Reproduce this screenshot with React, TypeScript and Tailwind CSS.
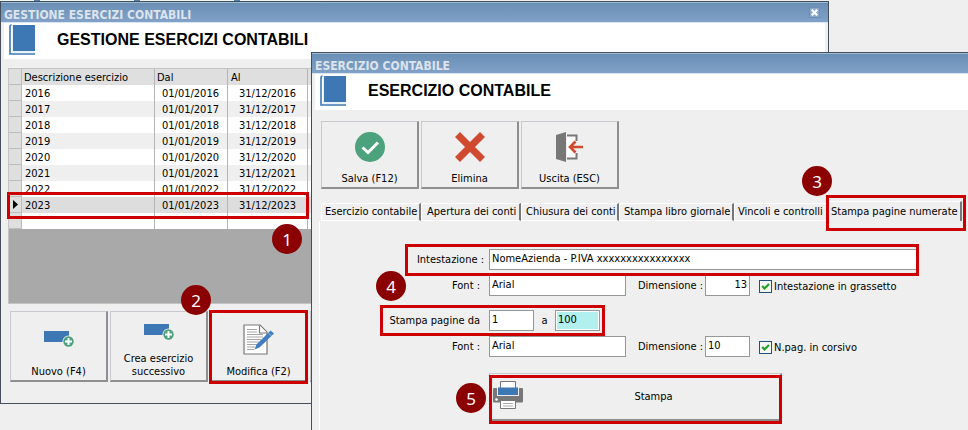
import React from 'react';

const YEARS = ['2016', '2017', '2018', '2019', '2020', '2021', '2022', '2023'];
const CURRENT_YEAR = '2023';

const TABS = [
  { label: 'Esercizio contabile', size: 'w-[100px] pl-[3px]' },
  { label: 'Apertura dei conti', size: 'w-[100px] pl-[5px]' },
  { label: 'Chiusura dei conti', size: 'w-[98px] pl-[4px]' },
  { label: 'Stampa libro giornale', size: 'w-[115px] pl-[4px]' },
  { label: 'Vincoli e controlli', size: 'w-[92px] pl-[3px]' },
  { label: 'Stampa pagine numerate', size: 'w-[136px] pl-[4px]' }
];

const BookIcon = () => (
  <svg width="26" height="32" viewBox="0 0 26 32" aria-hidden="true">
    <path d="M3 1H26V27H3Z" fill="#3d78b4" />
    <path d="M2.5 1C1.5 1 1 2 1 3V30H26" fill="none" stroke="#3d78b4" strokeWidth="1.6" />
    <path d="M3.5 1V27.5H26" fill="none" stroke="#e8f1fa" strokeWidth="1" />
    <path d="M2 28.3H26" stroke="#e8f1fa" strokeWidth="1.2" />
  </svg>
);

const AddIcon = () => (
  <svg width="30" height="18" viewBox="0 0 30 18" aria-hidden="true">
    <path d="M0 1H25V12H0Z" fill="#3d78b4" />
    <circle cx="24.5" cy="11.5" r="6" fill="#efefef" />
    <circle cx="24.5" cy="11.5" r="5.2" fill="#4ca27c" />
    <path d="M24.5 8V15M21 11.5H28" stroke="#fff" strokeWidth="2" />
  </svg>
);

const EditIcon = () => (
  <svg width="32" height="32" viewBox="0 0 32 32" aria-hidden="true">
    <path d="M1 1H17L24 8V30H1Z" fill="#fff" stroke="#777" strokeWidth="1.2" />
    <path d="M16.5 1.5V9H24" fill="#fff" stroke="#777" strokeWidth="1.2" />
    <path
      d="M4 5.5H14M4 8H14M4 10.5H20M4 13H20M4 15.5H18M4 18H16M4 20.5H14M4 23H12M4 25.5H11"
      stroke="#a5a5a5"
      strokeWidth="1"
    />
    <path d="M11.5 25.5L13.5 20.500L27.500 6.500L31 9.500L16.500 23.500Z" fill="#3f7cc0" />
    <path d="M25 8.500L28.500 12" stroke="#a9c8e8" strokeWidth="0.8" />
  </svg>
);

const SaveIcon = () => (
  <svg width="30" height="30" viewBox="0 0 30 30" aria-hidden="true">
    <circle cx="15" cy="15" r="15" fill="#4ca27c" />
    <path d="M7.5 15.5L13 20.5L23 10.5" fill="none" stroke="#fff" strokeWidth="3" />
  </svg>
);

const DeleteIcon = () => (
  <svg width="30" height="30" viewBox="0 0 30 30" aria-hidden="true">
    <path d="M2.5 2.5L27.5 27.5M27.5 2.5L2.5 27.5" stroke="#cf4a2e" strokeWidth="7" />
  </svg>
);

const ExitIcon = () => (
  <svg width="30" height="30" viewBox="0 0 30 30" aria-hidden="true">
    <path d="M12 3.5H21.500V26.5H12" fill="#fff" stroke="#777" strokeWidth="2" />
    <path d="M18 9H25V21H18Z" fill="#efefef" />
    <path d="M1 3L11 0V30L1 27Z" fill="#777" />
    <path d="M28 15H16M20.5 9.5L15 15L20.5 20.5" fill="none" stroke="#cf4a2e" strokeWidth="2.6" />
  </svg>
);

const PrinterIcon = () => (
  <svg width="30" height="28" viewBox="0 0 30 28" aria-hidden="true">
    <path d="M1 7H29Q30 7 30 8V20Q30 21.5 29 21.5H1Q0 21.5 0 20V8Q0 7 1 7Z" fill="#777" />
    <path d="M4 6H26V15H4Z" fill="#efefef" />
    <path d="M7.5 .5H22.5V8H7.5Z" fill="#fff" stroke="#777" />
    <path d="M5 6.5H25V14H5Z" fill="#3d78b4" />
    <path d="M7.5 19.5H22.5V27.5H7.5Z" fill="#fff" stroke="#777" />
    <path d="M10 22.5H20M10 25H20" stroke="#aaa" />
    <circle cx="3.5" cy="18.5" r="1.3" fill="#fff" />
  </svg>
);

const Badge = ({ n, className }: { n: number; className: string }) => (
  <span
    className={`absolute z-20 flex h-[30px] w-[30px] items-center justify-center rounded-full bg-[#8b0000] font-['Noto_Sans',sans-serif] text-[17px] leading-none text-white ${className}`}
  >
    {n}
  </span>
);

const Outline = ({ className }: { className: string }) => (
  <span className={`pointer-events-none absolute z-10 border-[3px] border-[#cc0000] ${className}`} />
);

const TitleBar = ({ title, closable }: { title: string; closable?: boolean }) => (
  <div className="flex h-[21px] items-center justify-between border-t border-b border-t-[#9dbbd3] border-b-[#dce6f0] bg-gradient-to-b from-[#6a8fb5] to-[#80a1c8] pt-[5px] pr-2 pl-[3px]">
    <span className="text-[12px] font-bold whitespace-nowrap text-[#dde3eb]">{title}</span>
    {closable && (
      <button
        type="button"
        aria-label="Chiudi"
        className="mb-[5px] flex h-[11px] w-[11px] items-center justify-center border border-[#6c8fb3] bg-[#8aa9cb]"
      >
        <svg width="7" height="7" viewBox="0 0 7 7" className="shrink-0">
          <path d="M.7 .7L6.3 6.3M6.3 .7L.7 6.3" stroke="#fff" strokeWidth="2.2" />
        </svg>
      </button>
    )}
  </div>
);

const Heading = ({ children, className }: { children: React.ReactNode; className: string }) => (
  <div className={`ml-[3px] flex h-9 items-start bg-white pt-[1px] pl-[5px] ${className}`}>
    <BookIcon />
    <h1 className="ml-[22px] pt-[6px] font-['Liberation_Sans',Arial,sans-serif] text-[16px] leading-5 font-bold whitespace-nowrap">
      {children}
    </h1>
  </div>
);

const ToolButton = ({
  icon,
  children,
  className
}: {
  icon: React.ReactNode;
  children: React.ReactNode;
  className: string;
}) => (
  <button
    type="button"
    className={`flex w-[98px] shrink-0 flex-col items-center justify-between border-t border-r-2 border-b-2 border-l border-t-[#c8c8ce] border-r-[#8f8f8f] border-b-[#8f8f8f] border-l-[#c8c8ce] leading-[13px] ${className}`}
  >
    {icon}
    <span>{children}</span>
  </button>
);

const Field = ({ className, ...props }: React.InputHTMLAttributes<HTMLInputElement>) => (
  <input
    type="text"
    className={`h-[21px] rounded-none border border-[#979797] px-[2px] pb-[2px] outline-none ${className}`}
    {...props}
  />
);

const CheckBox = ({ id, label }: { id: string; label: string }) => (
  <div className="mt-[2px] ml-[9px] flex items-center">
    <span className="relative flex h-[13px] w-[13px]">
      <input
        id={id}
        type="checkbox"
        defaultChecked
        className="peer h-[13px] w-[13px] appearance-none border border-[#1c5180] bg-[#f6f6f6]"
      />
      <svg
        viewBox="0 0 13 13"
        className="pointer-events-none absolute inset-0 hidden h-[13px] w-[13px] peer-checked:block"
      >
        <path d="M3.2 6L5.5 8.5L10 4" fill="none" stroke="#21a121" strokeWidth="2.2" />
      </svg>
    </span>
    <label htmlFor={id} className="ml-[2px] whitespace-nowrap">
      {label}
    </label>
  </div>
);

const YearsTable = () => (
  <div className="relative mx-[7px] mt-[9px] h-[236px] border border-[#c4c4c4] bg-[#a9a9a9]">
    <table className="w-full table-fixed border-separate border-spacing-0 bg-white">
      <colgroup>
        <col className="w-[13px]" />
        <col className="w-[133px]" />
        <col className="w-[73px]" />
        <col className="w-[80px]" />
        <col />
      </colgroup>
      <thead>
        <tr className="h-4 bg-[#dfdfdf] text-left leading-[15px]">
          <th className="border-r border-b border-[#bdbdbd] p-0" />
          <th className="border-r border-[#b5b5b5] p-0 pl-[2px] font-normal">Descrizione esercizio</th>
          <th className="border-r border-[#b5b5b5] p-0 pl-[2px] font-normal">Dal</th>
          <th className="border-r border-[#b5b5b5] p-0 pl-[3px] font-normal">Al</th>
          <th className="p-0" />
        </tr>
      </thead>
      <tbody>
        {YEARS.map((year, i) => (
          <tr
            key={year}
            className={`h-4 leading-[15px] ${
              year === CURRENT_YEAR ? 'bg-[#dddddd]' : i % 2 ? 'bg-[#efefef]' : 'bg-white'
            }`}
          >
            <td className="border-r border-b border-[#bdbdbd] bg-[#dfdfdf] p-0">
              {year === CURRENT_YEAR && (
                <svg width="5" height="9" viewBox="0 0 5 9" className="ml-1">
                  <path d="M0 0L5 4.5L0 9Z" />
                </svg>
              )}
            </td>
            <td className="border-r border-[#b5b5b5] p-0 pl-[3px]">{year}</td>
            <td className="border-r border-[#b5b5b5] p-0 pr-2 text-right">01/01/{year}</td>
            <td className="border-r border-[#b5b5b5] p-0 pr-[11px] text-right">31/12/{year}</td>
            <td className="p-0" />
          </tr>
        ))}
        <tr className="h-4">
          <td className="border-r border-b border-[#bdbdbd] bg-[#dfdfdf] p-0" />
          <td className="border-r border-[#b5b5b5] p-0" />
          <td className="border-r border-[#b5b5b5] p-0" />
          <td className="border-r border-[#b5b5b5] p-0" />
          <td className="p-0" />
        </tr>
      </tbody>
    </table>
    <Outline className="top-[123px] -left-[2px] h-[27px] w-[302px]" />
    <Badge n={1} className="top-[155px] left-[263px]" />
  </div>
);

const YearsWindow = () => (
  <section className="absolute top-px right-[139px] left-0 border border-[#454f5c] bg-[#efefef] pb-[21px]">
    <TitleBar title="GESTIONE ESERCIZI CONTABILI" closable />
    <Heading className="mr-[3px]">GESTIONE ESERCIZI CONTABILI</Heading>
    <YearsTable />
    <div className="mx-[9px] mt-[7px] flex gap-[2px] overflow-hidden">
      <ToolButton icon={<AddIcon />} className="h-[71px] pt-[18px] pb-[2px]">
        Nuovo (F4)
      </ToolButton>
      <ToolButton icon={<AddIcon />} className="h-[71px] pt-[11px] pb-[2px]">
        Crea esercizio
        <br />
        successivo
      </ToolButton>
      <ToolButton icon={<EditIcon />} className="h-[71px] pt-[12px] pb-[2px]">
        Modifica (F2)
      </ToolButton>
      <ToolButton icon={null} className="h-[71px]">
        {null}
      </ToolButton>
    </div>
    <Outline className="top-[308px] left-[208px] h-[74px] w-[99px]" />
    <Badge n={2} className="top-[283px] left-[180px]" />
  </section>
);

const PrintForm = () => (
  <form className="flex flex-col" onSubmit={(e) => e.preventDefault()}>
    <div className="relative mt-[28px] flex items-center">
      <label htmlFor="intestazione" className="w-[165px] pr-[1px] text-right whitespace-nowrap">
        Intestazione :
      </label>
      <Field
        id="intestazione"
        defaultValue="NomeAzienda - P.IVA xxxxxxxxxxxxxxxx"
        className="mr-[50px] ml-[4px] flex-1 bg-white"
      />
      <Outline className="-top-[5px] right-[49px] left-[85px] h-[32px]" />
      <Badge n={4} className="top-[22px] left-[56px]" />
    </div>
    <div className="mt-[5px] flex items-center">
      <label htmlFor="font-int" className="w-[160px] text-right">
        Font :
      </label>
      <Field id="font-int" defaultValue="Arial" className="ml-[9px] w-[137px] bg-white" />
      <label htmlFor="dim-int" className="ml-[12px] w-[67px] whitespace-nowrap">
        Dimensione :
      </label>
      <Field id="dim-int" defaultValue="13" className="w-[45px] bg-white text-right" />
      <CheckBox id="grassetto" label="Intestazione in grassetto" />
    </div>
    <div className="relative mt-[14px] flex items-center">
      <label htmlFor="pag-da" className="w-[160px] text-right whitespace-nowrap">
        Stampa pagine da
      </label>
      <Field id="pag-da" defaultValue="1" className="ml-[9px] w-[45px] bg-white" />
      <label htmlFor="pag-a" className="w-[21px] text-center">
        a
      </label>
      <Field
        id="pag-a"
        defaultValue="100"
        className="w-[45px] bg-[#b2f0f0] shadow-[inset_0_0_0_1px_#fff]"
      />
      <Outline className="-top-[5px] left-[60px] h-[31px] w-[225px]" />
    </div>
    <div className="mt-[5px] flex items-center">
      <label htmlFor="font-pag" className="w-[160px] text-right">
        Font :
      </label>
      <Field id="font-pag" defaultValue="Arial" className="ml-[9px] w-[137px] bg-white" />
      <label htmlFor="dim-pag" className="ml-[12px] w-[67px] whitespace-nowrap">
        Dimensione :
      </label>
      <Field id="dim-pag" defaultValue="10" className="w-[45px] bg-white" />
      <CheckBox id="corsivo" label="N.pag. in corsivo" />
    </div>
    <div className="relative mt-[16px] ml-[169px] w-[293px]">
      <button
        type="submit"
        className="flex h-[48px] w-full items-center border-t border-r-2 border-b-2 border-l border-t-[#c8c8ce] border-r-[#8f8f8f] border-b-[#8f8f8f] border-l-[#c8c8ce] pr-[2px] pl-[3px]"
      >
        <span className="pb-[4px]">
          <PrinterIcon />
        </span>
        <span className="flex-1 pl-[6px] text-center">Stampa</span>
      </button>
      <Outline className="top-[2px] left-0 h-[49px] w-[293px]" />
      <Badge n={5} className="top-[10px] -left-[33px]" />
    </div>
  </form>
);

const YearWindow = () => (
  <section className="absolute top-[52px] right-0 bottom-0 left-[311px] z-30 overflow-hidden border-t border-l border-[#454f5c] bg-[#efefef]">
    <TitleBar title="ESERCIZIO CONTABILE" />
    <Heading className="mr-0">ESERCIZIO CONTABILE</Heading>
    <div className="mt-[11px] ml-[9px] flex gap-[2px]">
      <ToolButton icon={<SaveIcon />} className="h-[68px] pt-[10px] pb-[2px]">
        Salva (F12)
      </ToolButton>
      <ToolButton icon={<DeleteIcon />} className="h-[68px] pt-[10px] pb-[2px]">
        Elimina
      </ToolButton>
      <ToolButton icon={<ExitIcon />} className="h-[68px] pt-[10px] pb-[2px]">
        Uscita (ESC)
      </ToolButton>
    </div>
    <div role="tablist" className="relative ml-[7px] flex h-[32px] items-end pl-[2px]">
      {TABS.map((tab, i) => {
        const active = i === TABS.length - 1;
        return (
          <button
            key={tab.label}
            type="button"
            role="tab"
            aria-selected={active}
            className={`shrink-0 rounded-tl-[3px] border-t border-l border-white text-left whitespace-nowrap ${tab.size} ${
              active ? 'h-[20px] border-r-2 border-r-[#777]' : 'h-[18px] border-b'
            } ${i < 4 ? 'border-r-2 border-r-[#777]' : ''}`}
          >
            {tab.label}
          </button>
        );
      })}
      <span className="h-px flex-1 bg-white" />
      <Outline className="top-[6px] left-[507px] h-[36px] w-[140px]" />
      <Badge n={3} className="-top-[23px] left-[483px]" />
    </div>
    <div role="tabpanel" className="ml-[7px] h-full border-l border-white">
      <PrintForm />
    </div>
  </section>
);

export default function App() {
  return (
    <main className="relative min-h-screen overflow-hidden bg-[#efefef] font-['DejaVu_Sans_Condensed','DejaVu_Sans',sans-serif] text-[11px] leading-[14px] text-black">
      <div className="flex h-px w-[327px] gap-[94px] bg-[#eef6f2] pl-[34px]">
        <span className="w-[6px] bg-[#4a7fae]" />
        <span className="w-[6px] bg-[#4a7fae]" />
        <span className="w-[6px] bg-[#4a7fae]" />
      </div>
      <YearsWindow />
      <YearWindow />
    </main>
  );
}
